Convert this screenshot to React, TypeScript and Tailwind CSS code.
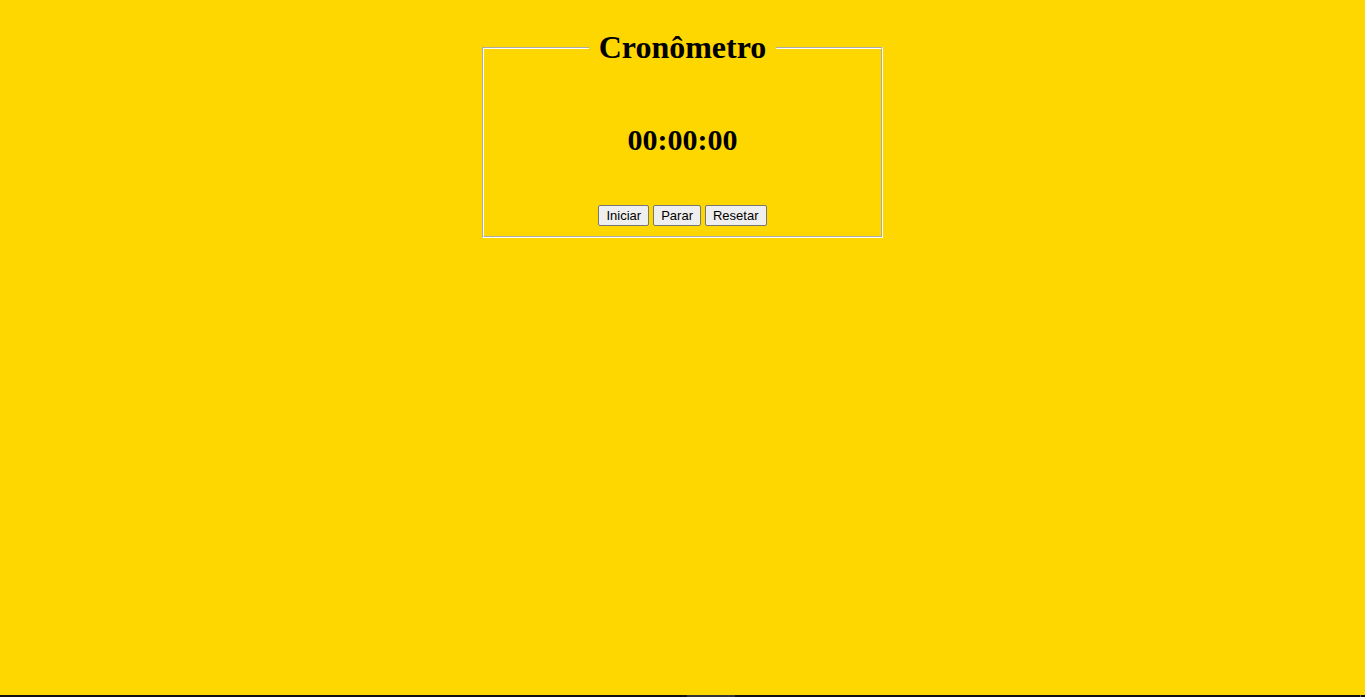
import { useEffect, useState } from "react";

const pad = (n: number) => String(n).padStart(2, "0");

function formatTime(total: number) {
  return [Math.floor(total / 3600), Math.floor(total / 60) % 60, total % 60].map(pad).join(":");
}

function Button({ label, onClick }: { label: string; onClick: () => void }) {
  return (
    <button
      type="button"
      onClick={onClick}
      className="h-[21px] rounded-[2px] border border-[#767676] bg-[#efefef] px-[7px] font-['Liberation_Sans',Arial,sans-serif] text-[13px] leading-[15px] text-black hover:bg-[#e5e5e5]"
    >
      {label}
    </button>
  );
}

export default function App() {
  const [seconds, setSeconds] = useState(0);
  const [running, setRunning] = useState(false);

  useEffect(() => {
    if (!running) return;
    const id = window.setInterval(() => setSeconds((s) => s + 1), 1000);
    return () => window.clearInterval(id);
  }, [running]);

  return (
    <div className="flex min-h-screen bg-white pr-[2px] pb-[2px]">
      <div className="flex flex-1 flex-col bg-[#ffd700] font-['Liberation_Serif','Times_New_Roman',serif] text-black">
        <main className="flex-1 px-2 pt-[29px]">
          <fieldset className="mx-auto w-full max-w-[401px] border-2 border-white [border-style:groove] pb-[10px] text-center">
            <legend className="mx-auto px-[10px]">
              <h1 className="text-[32px] leading-[37px] font-bold">Cronômetro</h1>
            </legend>
            <div role="timer" className="pt-[57px] pb-[48px] text-[30px] leading-[34px] font-bold">
              {formatTime(seconds)}
            </div>
            <div className="flex justify-center gap-1">
              <Button label="Iniciar" onClick={() => setRunning(true)} />
              <Button label="Parar" onClick={() => setRunning(false)} />
              <Button
                label="Resetar"
                onClick={() => {
                  setRunning(false);
                  setSeconds(0);
                }}
              />
            </div>
          </fieldset>
        </main>
        <footer className="flex h-[2px] bg-[#101010]">
          <div className="flex-1" />
          <div className="ml-[60px] w-12 bg-[#333333]" />
          <div className="flex flex-1 justify-end pr-1">
            <div className="w-px bg-[#666666]" />
          </div>
        </footer>
      </div>
    </div>
  );
}
